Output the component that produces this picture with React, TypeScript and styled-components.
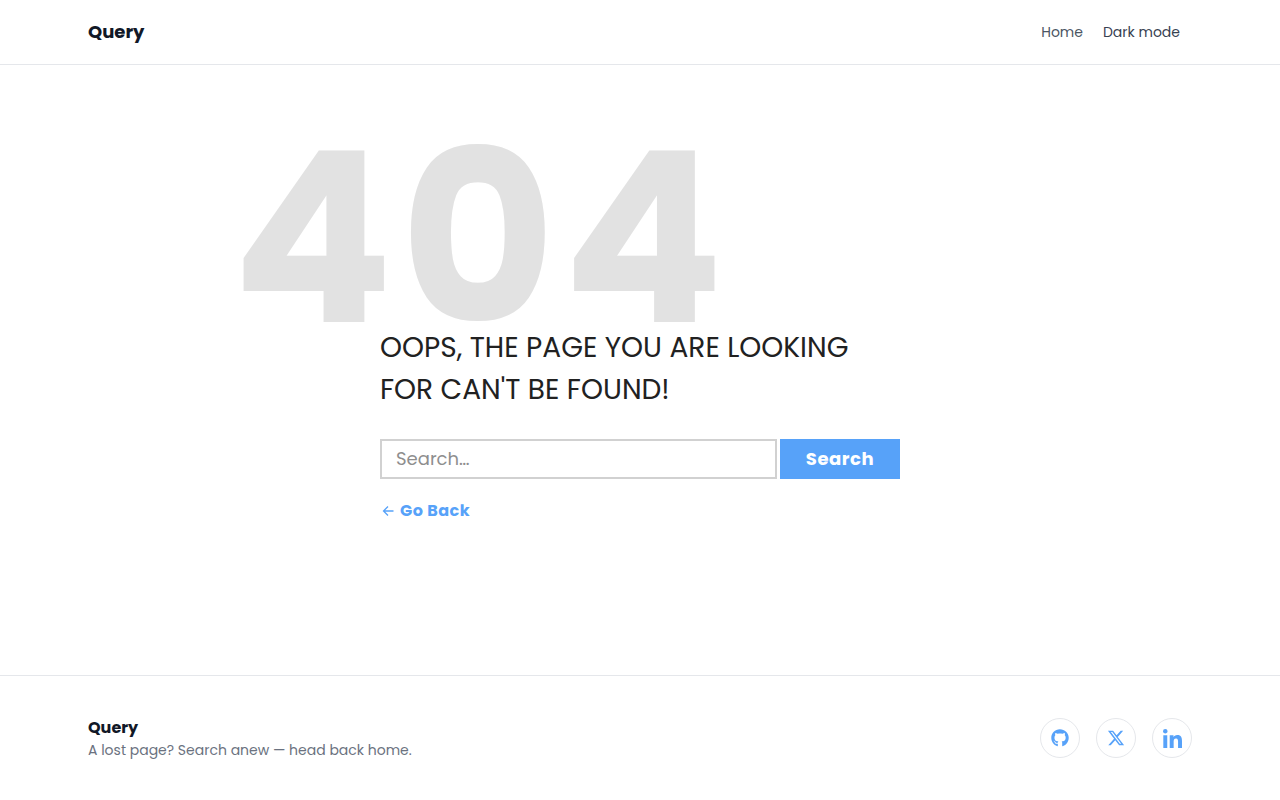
import React from "react";
import styled, { createGlobalStyle } from "styled-components";
import { FaGithub } from "react-icons/fa";
import { FaXTwitter } from "react-icons/fa6";

const GlobalStyle = createGlobalStyle`
  *, *::before, *::after { box-sizing: border-box; }
  body {
    margin: 0;
    background: #fff;
    color: #111827;
    font-family: Poppins, Inter, "Liberation Sans", sans-serif;
    font-size: 14px;
    line-height: 20px;
  }
  button, input { font-family: inherit; }
`;

const Page = styled.div`
  display: flex;
  flex-direction: column;
  min-height: 100vh;
`;

const Container = styled.div`
  display: flex;
  align-items: center;
  justify-content: space-between;
  width: 100%;
  max-width: 1152px;
  margin: 0 auto;
  padding: 0 24px;
`;

const Header = styled.header`
  display: flex;
  height: 65px;
  border-bottom: 1px solid #e5e7eb;
`;

const Brand = styled.a<{ $size: number }>`
  color: #111827;
  font-size: ${(p) => p.$size}px;
  font-weight: 700;
  line-height: 24px;
  text-decoration: none;
`;

const Nav = styled.nav`
  display: flex;
  align-items: center;
  gap: 8px;
`;

const NavLink = styled.a`
  color: #4b5563;
  text-decoration: none;
`;

const ThemeButton = styled.button`
  padding: 6px 12px;
  border: 0;
  background: none;
  color: #374151;
  font-size: 14px;
  line-height: 20px;
  cursor: pointer;
`;

const Main = styled.main`
  flex: 1;
  padding: 80px 24px;
`;

const NotFound = styled.section`
  width: 100%;
  max-width: 520px;
  margin: 0 auto;
`;

const Code = styled.h1`
  margin: 0 0 -6px -148px;
  color: #e2e2e2;
  font-size: 238px;
  font-weight: 700;
  line-height: 188px;
  letter-spacing: 0.03em;
  white-space: nowrap;
`;

const Message = styled.h2`
  margin: 0;
  color: #212121;
  font-size: 28px;
  font-weight: 400;
  line-height: 42px;
  text-transform: uppercase;
`;

const SearchForm = styled.form`
  display: flex;
  gap: 3px;
  margin: 28px 0 20px;
`;

const SearchInput = styled.input`
  flex: 1;
  min-width: 0;
  height: 40px;
  padding: 0 14px 2px;
  border: 2px solid #d1d1d1;
  background: #fff;
  color: #212121;
  font-size: 18px;
  &::placeholder { color: #8e8e8e; }
`;

const SearchButton = styled.button`
  width: 120px;
  height: 40px;
  padding: 0 0 2px;
  border: 0;
  background: #57a2f9;
  color: #fff;
  font-size: 18px;
  font-weight: 700;
  letter-spacing: 0.03em;
  cursor: pointer;
`;

const BackLink = styled.a`
  display: inline-flex;
  align-items: center;
  gap: 4px;
  color: #57a2f9;
  font-size: 16px;
  font-weight: 700;
  line-height: 24px;
  letter-spacing: 0.03em;
  text-decoration: none;
`;

const Footer = styled.footer`
  display: flex;
  padding: 40px 0;
  border-top: 1px solid #e5e7eb;
`;

const Tagline = styled.p`
  margin: 0;
  color: #6b7280;
`;

const Socials = styled.div`
  display: flex;
  gap: 16px;
`;

const SocialLink = styled.a`
  display: flex;
  align-items: center;
  justify-content: center;
  width: 40px;
  height: 40px;
  border: 1px solid #e5e7eb;
  border-radius: 50%;
  color: #57a2f9;
`;

const ArrowLeft = () => (
  <svg width="16" height="16" viewBox="0 0 16 16" fill="none" stroke="currentColor" strokeWidth="1.3" aria-hidden="true">
    <path d="M13.5 8H3.500M8 3.500L3.500 8l4.500 4.500" />
  </svg>
);

const LinkedIn = () => (
  <svg width="19" height="19" viewBox="0 0 448 448" fill="currentColor" aria-hidden="true">
    <path d="M100.28 448H7.4V148.9h92.88zM53.79 108.1C24.09 108.1 0 83.5 0 53.8a53.79 53.79 0 0 1 107.58 0c0 29.7-24.1 54.3-53.79 54.3zM447.9 448h-92.68V302.4c0-34.7-.7-79.2-48.29-79.2-48.29 0-55.69 37.7-55.69 76.7V448h-92.78V148.9h89.08v40.8h1.3c12.4-23.5 42.69-48.3 87.88-48.3 94 0 111.28 61.9 111.28 142.3V448z" />
  </svg>
);

export default function App() {
  return (
    <Page>
      <GlobalStyle />
      <Header>
        <Container>
          <Brand href="#" $size={18}>Query</Brand>
          <Nav>
            <NavLink href="#">Home</NavLink>
            <ThemeButton type="button">Dark mode</ThemeButton>
          </Nav>
        </Container>
      </Header>
      <Main>
        <NotFound>
          <Code>404</Code>
          <Message>Oops, the page you are looking for can't be found!</Message>
          <SearchForm onSubmit={(e) => e.preventDefault()}>
            <SearchInput type="text" placeholder="Search…" aria-label="Search" />
            <SearchButton type="submit">Search</SearchButton>
          </SearchForm>
          <BackLink href="#">
            <ArrowLeft />
            Go Back
          </BackLink>
        </NotFound>
      </Main>
      <Footer>
        <Container>
          <div>
            <Brand href="#" $size={16}>Query</Brand>
            <Tagline>A lost page? Search anew — head back home.</Tagline>
          </div>
          <Socials>
            <SocialLink href="#" aria-label="GitHub"><FaGithub size={18} /></SocialLink>
            <SocialLink href="#" aria-label="X"><FaXTwitter size={18} /></SocialLink>
            <SocialLink href="#" aria-label="LinkedIn"><LinkedIn /></SocialLink>
          </Socials>
        </Container>
      </Footer>
    </Page>
  );
}
